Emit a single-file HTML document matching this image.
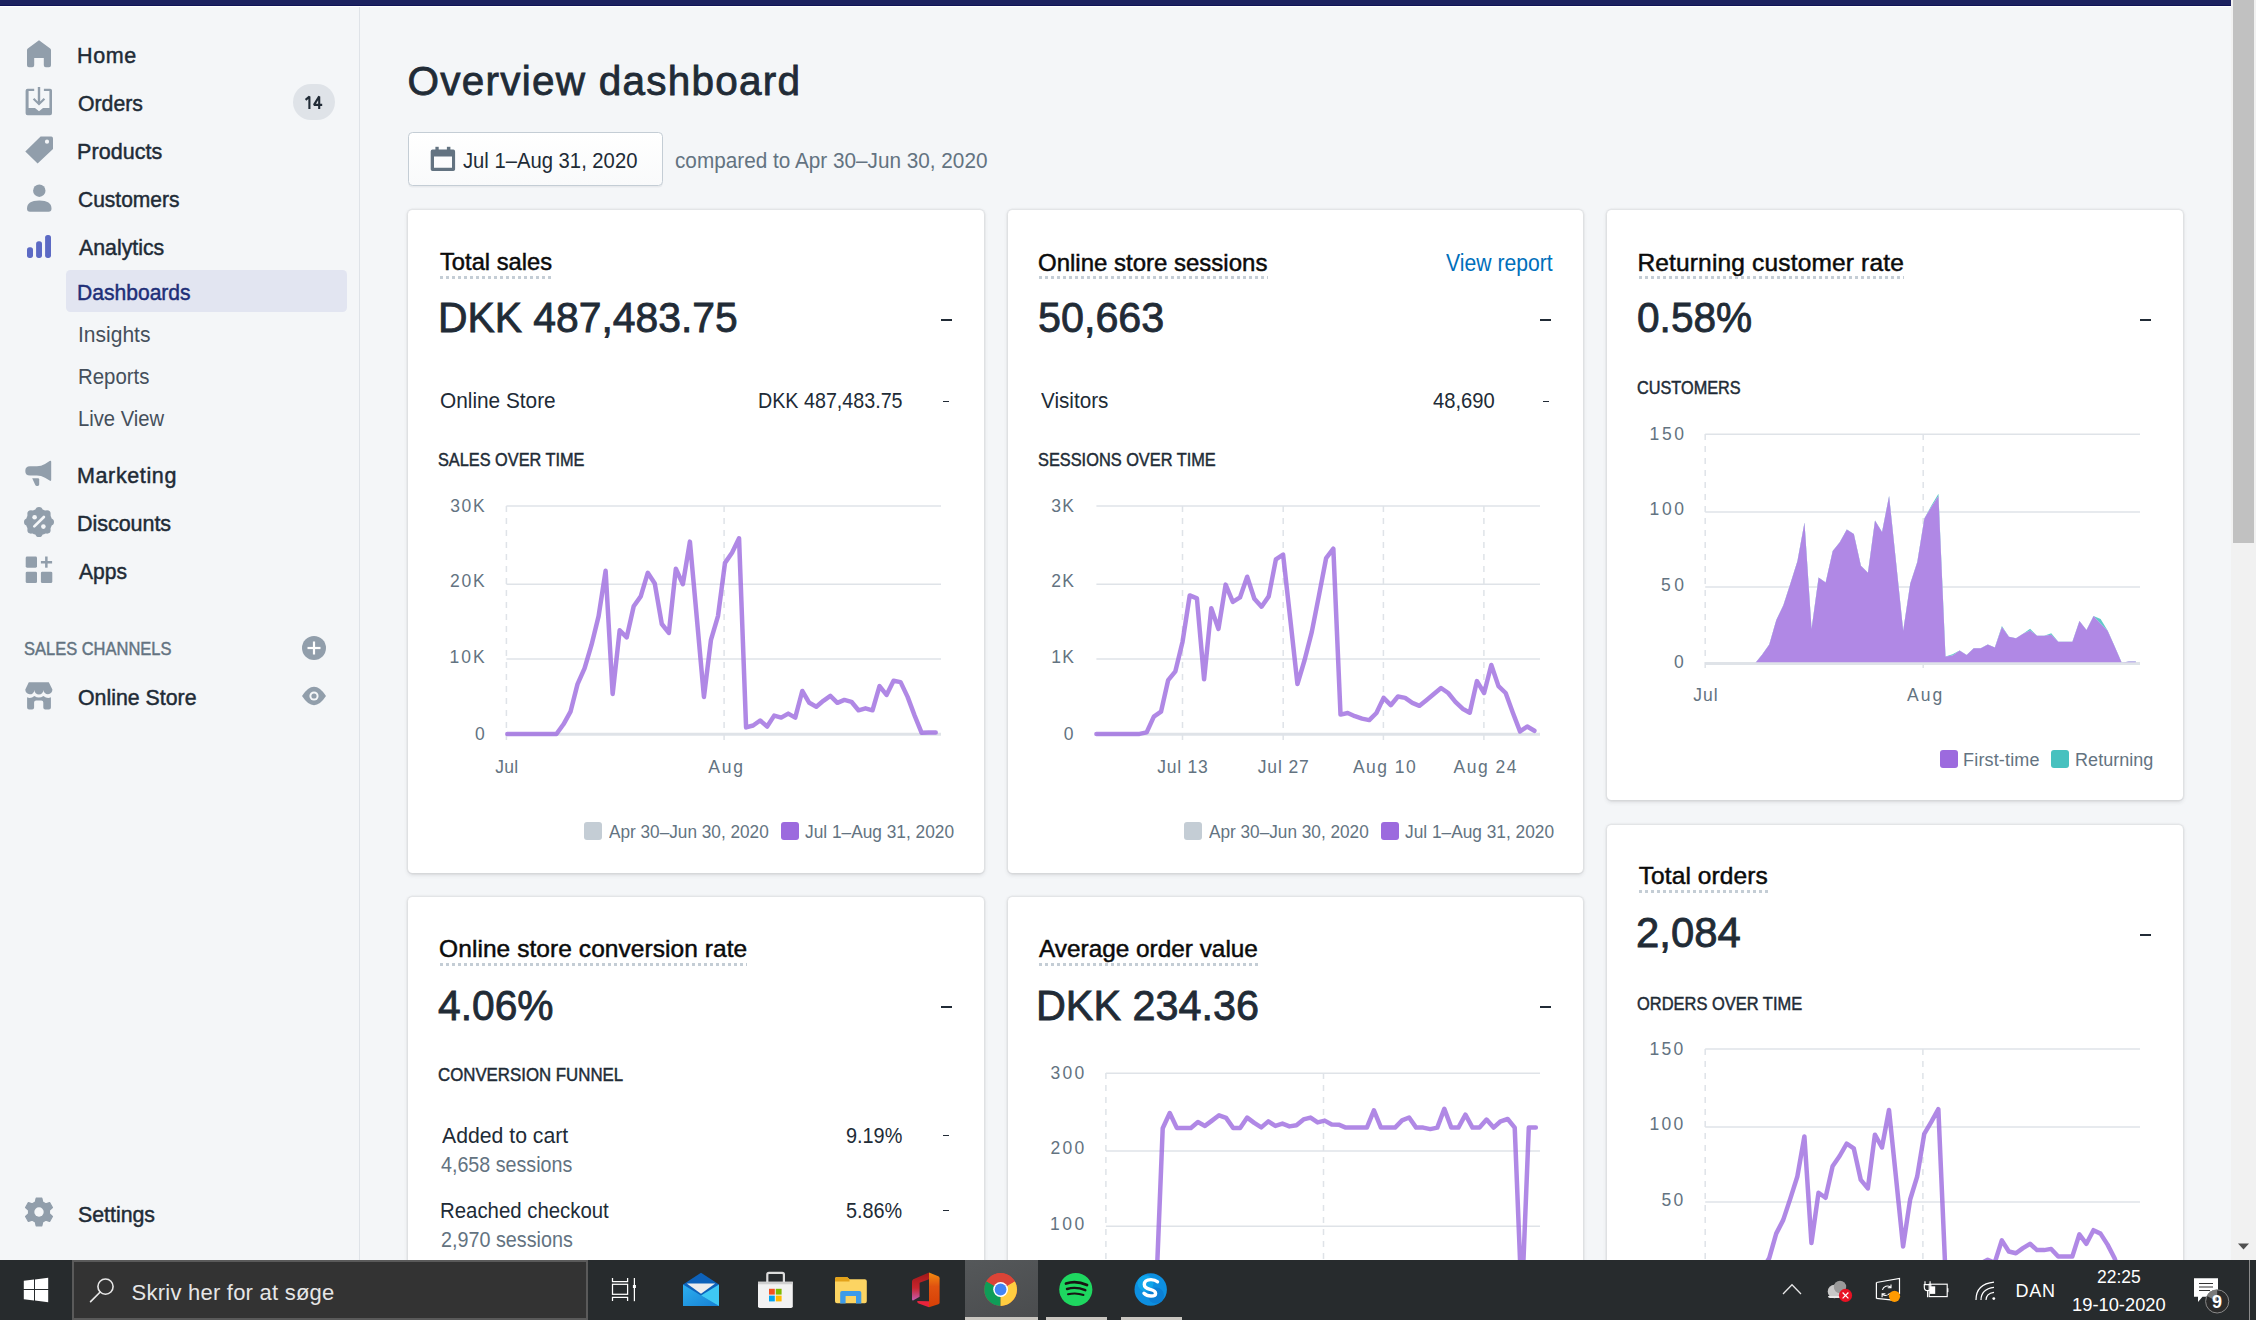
<!DOCTYPE html><html><head><meta charset="utf-8"><title>Overview dashboard</title><style>
*{margin:0;padding:0;box-sizing:border-box}
html,body{width:2256px;height:1320px;overflow:hidden;background:#f4f6f8;font-family:"Liberation Sans",sans-serif}
.t{position:absolute;white-space:nowrap;line-height:1}
.abs{position:absolute}
.card{position:absolute;background:#fff;border-radius:4.5px;box-shadow:0 0 0 1.5px rgba(63,63,68,.05),0 1.5px 4.5px 0 rgba(63,63,68,.15)}
.dot{position:absolute;height:3px;background:repeating-linear-gradient(90deg,#c4cdd5 0 3px,transparent 3px 6px)}
.dash{position:absolute;background:#212b36}
</style></head><body>
<div class="abs" style="left:0;top:0;width:2231px;height:5px;background:#1c2260"></div>
<div class="abs" style="left:0;top:5px;width:2231px;height:1px;background:#0f1357"></div>
<div class="abs" style="left:0;top:6px;width:2231px;height:1px;background:#fff"></div>
<div class="abs" style="left:359px;top:7px;width:1px;height:1253px;background:#dfe3e8"></div>
<div class="abs" style="left:66px;top:270px;width:281px;height:42px;background:#e2e5f1;border-radius:4.5px"></div>
<div class="abs" style="left:293px;top:84px;width:42px;height:36px;background:#dfe3e8;border-radius:18px"></div>
<div id="nav">
<div class="t" style="left:77.00px;top:46.10px;font-size:21.5px;color:#212b36;letter-spacing:0.633px;-webkit-text-stroke:0.45px #212b36;">Home</div>
<div class="t" style="left:77.80px;top:93.80px;font-size:21.5px;color:#212b36;transform:scaleX(0.9875);transform-origin:0 0;-webkit-text-stroke:0.45px #212b36;">Orders</div>
<div class="t" style="left:77.00px;top:141.60px;font-size:21.5px;color:#212b36;letter-spacing:0.071px;-webkit-text-stroke:0.45px #212b36;">Products</div>
<div class="t" style="left:77.70px;top:189.60px;font-size:21.5px;color:#212b36;transform:scaleX(0.9765);transform-origin:0 0;-webkit-text-stroke:0.45px #212b36;">Customers</div>
<div class="t" style="left:78.70px;top:238.10px;font-size:21.5px;color:#212b36;transform:scaleX(0.9906);transform-origin:0 0;-webkit-text-stroke:0.45px #212b36;">Analytics</div>
<div class="t" style="left:77.00px;top:466.10px;font-size:21.5px;color:#212b36;letter-spacing:0.625px;-webkit-text-stroke:0.45px #212b36;">Marketing</div>
<div class="t" style="left:77.00px;top:513.80px;font-size:21.5px;color:#212b36;letter-spacing:-0.037px;-webkit-text-stroke:0.45px #212b36;">Discounts</div>
<div class="t" style="left:78.70px;top:561.80px;font-size:21.5px;color:#212b36;transform:scaleX(0.9793);transform-origin:0 0;-webkit-text-stroke:0.45px #212b36;">Apps</div>
<div class="t" style="left:77.80px;top:688.00px;font-size:21.5px;color:#212b36;transform:scaleX(0.9915);transform-origin:0 0;-webkit-text-stroke:0.45px #212b36;">Online Store</div>
<div class="t" style="left:77.80px;top:1204.70px;font-size:21.5px;color:#212b36;transform:scaleX(0.9908);transform-origin:0 0;-webkit-text-stroke:0.45px #212b36;">Settings</div>
<div class="t" style="left:77.30px;top:282.30px;font-size:22.0px;color:#202e78;transform:scaleX(0.9578);transform-origin:0 0;-webkit-text-stroke:0.45px #202e78;">Dashboards</div>
<div class="t" style="left:77.70px;top:324.20px;font-size:22.5px;color:#454f5b;transform:scaleX(0.9343);transform-origin:0 0;">Insights</div>
<div class="t" style="left:78.00px;top:366.10px;font-size:22.5px;color:#454f5b;transform:scaleX(0.9067);transform-origin:0 0;">Reports</div>
<div class="t" style="left:78.00px;top:408.00px;font-size:22.5px;color:#454f5b;transform:scaleX(0.8980);transform-origin:0 0;">Live View</div>
<div class="t" style="left:23.60px;top:640.00px;font-size:18.5px;color:#637381;transform:scaleX(0.8907);transform-origin:0 0;-webkit-text-stroke:0.45px #637381;">SALES CHANNELS</div>
<svg class="abs" style="left:0;top:0" width="360" height="130"><g fill="none" stroke="#212b36" stroke-width="2.1"><path d="M305.6 99.9 L309.4 96.6 L309.4 108.9" stroke-linejoin="bevel"/><path d="M319.2 108.9 L319.2 96.4 L314 104.9 L322.2 104.9" stroke-linejoin="bevel"/></g></svg>
</div>
<svg class="abs" style="left:0;top:0" width="360" height="1260" viewBox="0 0 360 1260">
<g fill="#919eab">
<path d="M39 40.2 L50.2 48.6 Q51 49.2 51 50.2 L51 65.3 Q51 67.3 49 67.3 L45.8 67.3 Q43.8 67.3 43.8 65.3 L43.8 58.1 L34.2 58.1 L34.2 65.3 Q34.2 67.3 32.2 67.3 L29 67.3 Q27 67.3 27 65.3 L27 50.2 Q27 49.2 27.8 48.6 Z"/>
<path d="M27.6 88.8 L34.2 88.8 L34.2 91 L28.6 91 L28.6 108 L35 108 L39 111.3 L43 108 L49.4 108 L49.4 91 L43.9 91 L43.9 88.8 L50.2 88.8 Q52 88.8 52 90.6 L52 113.2 Q52 115.2 50 115.2 L27.6 115.2 Q25.6 115.2 25.6 113.2 L25.6 90.8 Q25.6 88.8 27.6 88.8 Z"/>
<path d="M37.8 87 L40.2 87 L40.2 101.5 L43.6 98 L45.2 99.6 L39 105.6 L32.8 99.6 L34.4 98 L37.8 101.5 Z"/>
<path fill-rule="evenodd" d="M40.6 136.6 L51.2 136.6 Q53 136.6 53 138.4 L53 149 L37.6 163.5 L25.3 151.4 Z M47 139.6 A2.1 2.1 0 1 0 47 143.8 A2.1 2.1 0 1 0 47 139.6 Z"/>
<circle cx="39.3" cy="190.7" r="6.2"/>
<path d="M27 208.7 Q27 200.5 39.25 200.5 Q51.5 200.5 51.5 208.7 Q51.5 211.7 48.5 211.7 L30 211.7 Q27 211.7 27 208.7 Z"/>
<path d="M30 466.3 L37 466.3 Q41 466.3 45 464 L49.6 461 Q51.2 460.1 51.2 461.8 L51.2 479.8 Q51.2 481.5 49.6 480.6 L45 477.8 Q41 475.6 37 475.6 L30 475.6 Q25.3 475.6 25.3 470.95 Q25.3 466.3 30 466.3 Z"/>
<path d="M32.2 478.2 L38 478.2 Q39.2 478.2 39.2 479.4 L39.2 484.6 Q39.2 486 37.6 486 L36.8 486 Q35.8 486 35.3 485 Z"/>
<circle cx="39" cy="522" r="13.1"/><circle cx="39.00" cy="510.60" r="3.6"/><circle cx="47.06" cy="513.94" r="3.6"/><circle cx="50.40" cy="522.00" r="3.6"/><circle cx="47.06" cy="530.06" r="3.6"/><circle cx="39.00" cy="533.40" r="3.6"/><circle cx="30.94" cy="530.06" r="3.6"/><circle cx="27.60" cy="522.00" r="3.6"/><circle cx="30.94" cy="513.94" r="3.6"/><circle cx="34.6" cy="517.3" r="2.3" fill="#f4f6f8"/><circle cx="43.4" cy="526.6" r="2.3" fill="#f4f6f8"/><path d="M34.3 526.4 L43.9 517" stroke="#f4f6f8" stroke-width="2.7" stroke-linecap="round"/>
<rect x="25.7" y="556.6" width="11.3" height="11.1" rx="1.4"/>
<rect x="25.7" y="571.7" width="11.3" height="11.4" rx="1.4"/>
<rect x="40.9" y="571.7" width="11.4" height="11.4" rx="1.4"/>
<rect x="40.9" y="561" width="11.2" height="2.5"/>
<rect x="45.1" y="556.5" width="2.5" height="11.2"/>
<circle cx="314" cy="648" r="12"/>
<path d="M28.8 682.3 L48.8 682.3 L52.4 689.6 A4.5 4.5 0 0 1 43.4 690 A4.5 4.5 0 0 1 34.4 690 A4.5 4.5 0 0 1 25.3 689.6 Z"/>
<path d="M27.1 697.2 Q30.5 699.2 34.4 696 Q38.9 699.2 43.4 696 Q47.5 699.2 50.9 697.2 L50.9 707.4 Q50.9 709.4 48.9 709.4 L45.3 709.4 Q43.3 709.4 43.3 707.4 L43.3 702.5 Q43.3 700.5 41.3 700.5 L36.1 700.5 Q34.1 700.5 34.1 702.5 L34.1 707.4 Q34.1 709.4 32.1 709.4 L29.1 709.4 Q27.1 709.4 27.1 707.4 Z"/>
<path d="M302 696 Q308 686.8 314 686.8 Q320 686.8 326 696 Q320 705.2 314 705.2 Q308 705.2 302 696 Z"/>
</g>
<rect x="27" y="247.3" width="6" height="10.6" rx="2.6" fill="#5c6ac4"/>
<rect x="36.1" y="241.3" width="5.9" height="16.6" rx="2.6" fill="#5c6ac4"/>
<rect x="45.1" y="235" width="5.9" height="22.9" rx="2.6" fill="#5c6ac4"/>
<g fill="#fff"><rect x="312.9" y="641.5" width="2.2" height="13"/><rect x="307.5" y="646.9" width="13" height="2.2"/></g>
<circle cx="314" cy="696" r="4.6" fill="#f4f6f8"/><circle cx="314" cy="696" r="2.6" fill="#919eab"/>
<path d="M35.27 1202.08 L36.18 1198.08 L41.82 1198.08 L42.73 1202.08 L45.72 1203.81 L49.64 1202.60 L52.46 1207.48 L49.46 1210.27 L49.46 1213.73 L52.46 1216.52 L49.64 1221.40 L45.72 1220.19 L42.73 1221.92 L41.82 1225.92 L36.18 1225.92 L35.27 1221.92 L32.28 1220.19 L28.36 1221.40 L25.54 1216.52 L28.54 1213.73 L28.54 1210.27 L25.54 1207.48 L28.36 1202.60 L32.28 1203.81 Z" fill="#919eab" stroke="#919eab" stroke-width="1.2" stroke-linejoin="round"/><circle cx="39" cy="1212" r="4.7" fill="#f4f6f8"/></svg>
<div class="t" style="left:407.40px;top:61.20px;font-size:40.5px;color:#212b36;letter-spacing:1.253px;-webkit-text-stroke:0.81px #212b36;">Overview dashboard</div>
<div class="abs" style="left:407.7px;top:132px;width:255px;height:54px;border:1.5px solid #c4cdd5;border-radius:4.5px;background:linear-gradient(#fff,#f9fafb);box-shadow:0 1.5px 0 rgba(22,29,37,.05)"></div>
<svg class="abs" style="left:0;top:0" width="700" height="200" viewBox="0 0 700 200">
<path fill="#637381" fill-rule="evenodd" d="M432.5 149.6 L453.3 149.6 Q455.1 149.6 455.1 151.4 L455.1 169.2 Q455.1 171 453.3 171 L432.5 171 Q430.7 171 430.7 169.2 L430.7 151.4 Q430.7 149.6 432.5 149.6 Z M434 156.5 L434 167.7 L452 167.7 L452 156.5 Z"/>
<rect x="435.4" y="146.8" width="3.3" height="4" fill="#637381"/><rect x="446.9" y="146.8" width="3.5" height="4" fill="#637381"/>
</svg>
<div class="t" style="left:462.90px;top:150.20px;font-size:22.5px;color:#212b36;transform:scaleX(0.8993);transform-origin:0 0;">Jul 1–Aug 31, 2020</div>
<div class="t" style="left:674.70px;top:150.20px;font-size:22.5px;color:#637381;transform:scaleX(0.9217);transform-origin:0 0;">compared to Apr 30–Jun 30, 2020</div>
<div class="card" style="left:408px;top:210px;width:576px;height:663px"></div>
<div class="card" style="left:1008px;top:210px;width:575px;height:663px"></div>
<div class="card" style="left:1607px;top:210px;width:576px;height:590px"></div>
<div class="card" style="left:1607px;top:825px;width:576px;height:600px"></div>
<div class="card" style="left:408px;top:897px;width:576px;height:600px"></div>
<div class="card" style="left:1008px;top:897px;width:575px;height:600px"></div>
<div class="t" style="left:439.50px;top:250.30px;font-size:24.5px;color:#0b0b0b;transform:scaleX(0.9677);transform-origin:0 0;-webkit-text-stroke:0.49px #0b0b0b;">Total sales</div>
<div class="dot" style="left:440px;top:275.9px;width:111.7px"></div>
<div class="t" style="left:1038.20px;top:250.50px;font-size:24.5px;color:#0b0b0b;transform:scaleX(0.9793);transform-origin:0 0;-webkit-text-stroke:0.49px #0b0b0b;">Online store sessions</div>
<div class="dot" style="left:1039.4px;top:276.1px;width:228.4px"></div>
<div class="t" style="left:1637.40px;top:250.50px;font-size:24.5px;color:#0b0b0b;letter-spacing:0.164px;-webkit-text-stroke:0.49px #0b0b0b;">Returning customer rate</div>
<div class="dot" style="left:1639.4px;top:276.1px;width:264.3px"></div>
<div class="t" style="left:1638.70px;top:864.30px;font-size:24.5px;color:#0b0b0b;letter-spacing:0.100px;-webkit-text-stroke:0.49px #0b0b0b;">Total orders</div>
<div class="dot" style="left:1639.2px;top:889.9px;width:128.8px"></div>
<div class="t" style="left:439.10px;top:937.20px;font-size:24.5px;color:#0b0b0b;letter-spacing:0.063px;-webkit-text-stroke:0.49px #0b0b0b;">Online store conversion rate</div>
<div class="dot" style="left:440.3px;top:962.8px;width:306.8px"></div>
<div class="t" style="left:1039.30px;top:937.20px;font-size:24.5px;color:#0b0b0b;transform:scaleX(0.9941);transform-origin:0 0;-webkit-text-stroke:0.49px #0b0b0b;">Average order value</div>
<div class="dot" style="left:1039.4px;top:962.8px;width:218.7px"></div>
<div class="t" style="left:1446.20px;top:251.50px;font-size:23.0px;color:#006fbb;transform:scaleX(0.9204);transform-origin:0 0;">View report</div>
<div class="t" style="left:437.60px;top:297.20px;font-size:42.0px;color:#212b36;transform:scaleX(0.9723);transform-origin:0 0;-webkit-text-stroke:0.84px #212b36;">DKK 487,483.75</div>
<div class="t" style="left:1037.70px;top:297.00px;font-size:42.0px;color:#212b36;transform:scaleX(0.9832);transform-origin:0 0;-webkit-text-stroke:0.84px #212b36;">50,663</div>
<div class="t" style="left:1637.00px;top:297.00px;font-size:42.0px;color:#212b36;transform:scaleX(0.9672);transform-origin:0 0;-webkit-text-stroke:0.84px #212b36;">0.58%</div>
<div class="t" style="left:1636.40px;top:912.00px;font-size:42.0px;color:#212b36;transform:scaleX(0.9961);transform-origin:0 0;-webkit-text-stroke:0.84px #212b36;">2,084</div>
<div class="t" style="left:437.90px;top:984.60px;font-size:42.0px;color:#212b36;transform:scaleX(0.9700);transform-origin:0 0;-webkit-text-stroke:0.84px #212b36;">4.06%</div>
<div class="t" style="left:1036.00px;top:984.60px;font-size:42.0px;color:#212b36;transform:scaleX(0.9842);transform-origin:0 0;-webkit-text-stroke:0.84px #212b36;">DKK 234.36</div>
<div class="dash" style="left:940.5px;top:318.5px;width:11px;height:2.6px"></div>
<div class="dash" style="left:1540px;top:318.5px;width:11px;height:2.6px"></div>
<div class="dash" style="left:2139.5px;top:318.5px;width:11px;height:2.6px"></div>
<div class="dash" style="left:2139.5px;top:933.5px;width:11px;height:2.6px"></div>
<div class="dash" style="left:940.5px;top:1005.5px;width:11px;height:2.6px"></div>
<div class="dash" style="left:1540px;top:1005.5px;width:11px;height:2.6px"></div>
<div class="dash" style="left:942.5px;top:400.5px;width:6px;height:1.8px"></div>
<div class="dash" style="left:1542.5px;top:400.5px;width:6px;height:1.8px"></div>
<div class="dash" style="left:942.5px;top:1134.5px;width:6px;height:1.8px"></div>
<div class="dash" style="left:942.5px;top:1209.5px;width:6px;height:1.8px"></div>
<div class="t" style="left:440.30px;top:390.20px;font-size:22.0px;color:#212b36;transform:scaleX(0.9460);transform-origin:0 0;">Online Store</div>
<div class="t" style="left:757.80px;top:390.20px;font-size:22.0px;color:#212b36;transform:scaleX(0.8954);transform-origin:0 0;">DKK 487,483.75</div>
<div class="t" style="left:1041.10px;top:390.20px;font-size:22.0px;color:#212b36;transform:scaleX(0.9393);transform-origin:0 0;">Visitors</div>
<div class="t" style="left:1433.00px;top:390.20px;font-size:22.0px;color:#212b36;transform:scaleX(0.9182);transform-origin:0 0;">48,690</div>
<div class="t" style="left:441.70px;top:1124.90px;font-size:22.0px;color:#212b36;transform:scaleX(0.9648);transform-origin:0 0;">Added to cart</div>
<div class="t" style="left:845.90px;top:1124.90px;font-size:22.0px;color:#212b36;transform:scaleX(0.9026);transform-origin:0 0;">9.19%</div>
<div class="t" style="left:441.30px;top:1154.30px;font-size:22.0px;color:#637381;transform:scaleX(0.8942);transform-origin:0 0;">4,658 sessions</div>
<div class="t" style="left:440.00px;top:1199.50px;font-size:22.0px;color:#212b36;transform:scaleX(0.9262);transform-origin:0 0;">Reached checkout</div>
<div class="t" style="left:846.00px;top:1199.50px;font-size:22.0px;color:#212b36;transform:scaleX(0.9012);transform-origin:0 0;">5.86%</div>
<div class="t" style="left:440.70px;top:1229.10px;font-size:22.0px;color:#637381;transform:scaleX(0.8979);transform-origin:0 0;">2,970 sessions</div>
<div class="t" style="left:438.10px;top:450.70px;font-size:18.0px;color:#212b36;transform:scaleX(0.9057);transform-origin:0 0;-webkit-text-stroke:0.45px #212b36;">SALES OVER TIME</div>
<div class="t" style="left:1037.80px;top:451.00px;font-size:18.0px;color:#212b36;transform:scaleX(0.9083);transform-origin:0 0;-webkit-text-stroke:0.45px #212b36;">SESSIONS OVER TIME</div>
<div class="t" style="left:1637.10px;top:379.10px;font-size:18.0px;color:#212b36;transform:scaleX(0.9044);transform-origin:0 0;-webkit-text-stroke:0.45px #212b36;">CUSTOMERS</div>
<div class="t" style="left:1636.70px;top:994.50px;font-size:18.0px;color:#212b36;transform:scaleX(0.9140);transform-origin:0 0;-webkit-text-stroke:0.45px #212b36;">ORDERS OVER TIME</div>
<div class="t" style="left:438.00px;top:1066.00px;font-size:18.0px;color:#212b36;transform:scaleX(0.9349);transform-origin:0 0;-webkit-text-stroke:0.45px #212b36;">CONVERSION FUNNEL</div>
<svg class="abs" style="left:0;top:0" width="2256" height="1320" viewBox="0 0 2256 1320">
<line x1="506.4" y1="506" x2="941" y2="506" stroke="#dfe3e8" stroke-width="1.5"/>
<line x1="506.4" y1="584.2" x2="941" y2="584.2" stroke="#dfe3e8" stroke-width="1.5"/>
<line x1="506.4" y1="658.9" x2="941" y2="658.9" stroke="#dfe3e8" stroke-width="1.5"/>
<line x1="506.4" y1="734.3" x2="941" y2="734.3" stroke="#dfe3e8" stroke-width="3"/>
<line x1="506.4" y1="506" x2="506.4" y2="742" stroke="#dfe3e8" stroke-width="1.5" stroke-dasharray="6 6"/>
<line x1="724.1" y1="506" x2="724.1" y2="742" stroke="#dfe3e8" stroke-width="1.5" stroke-dasharray="6 6"/>
<polyline points="507.30,734.00 514.32,734.00 521.35,734.00 528.37,734.00 535.39,734.00 542.41,734.00 549.44,734.00 556.46,734.00 563.48,724.30 570.51,711.70 577.53,684.10 584.55,668.30 591.58,644.70 598.60,616.10 605.62,570.80 612.64,693.90 619.67,630.30 626.69,637.40 633.71,606.30 640.74,596.40 647.76,572.80 654.78,583.60 661.81,624.00 668.83,632.90 675.85,568.80 682.88,584.20 689.90,541.60 696.92,619.00 703.94,696.90 710.97,639.80 717.99,616.10 725.01,562.90 732.04,552.70 739.06,538.30 746.08,727.40 753.11,725.50 760.13,720.50 767.15,726.50 774.17,715.60 781.20,717.60 788.22,713.60 795.24,717.60 802.27,691.00 809.29,702.80 816.31,706.70 823.34,700.80 830.36,695.90 837.38,702.80 844.40,699.90 851.43,701.80 858.45,710.30 865.47,708.30 872.50,710.30 879.52,686.10 886.54,694.90 893.57,680.70 900.59,682.10 907.61,696.90 914.63,715.60 921.66,732.80 928.68,732.40 935.70,732.40" fill="none" stroke="#9c6ade" stroke-opacity="0.8" stroke-width="4.5" stroke-linejoin="round" stroke-linecap="round"/>
<line x1="1096.4" y1="506" x2="1540" y2="506" stroke="#dfe3e8" stroke-width="1.5"/>
<line x1="1096.4" y1="584.2" x2="1540" y2="584.2" stroke="#dfe3e8" stroke-width="1.5"/>
<line x1="1096.4" y1="658.9" x2="1540" y2="658.9" stroke="#dfe3e8" stroke-width="1.5"/>
<line x1="1096.4" y1="734.3" x2="1540" y2="734.3" stroke="#dfe3e8" stroke-width="3"/>
<line x1="1182.5" y1="506" x2="1182.5" y2="742" stroke="#dfe3e8" stroke-width="1.5" stroke-dasharray="6 6"/>
<line x1="1283.2" y1="506" x2="1283.2" y2="742" stroke="#dfe3e8" stroke-width="1.5" stroke-dasharray="6 6"/>
<line x1="1383.4" y1="506" x2="1383.4" y2="742" stroke="#dfe3e8" stroke-width="1.5" stroke-dasharray="6 6"/>
<line x1="1483.9" y1="506" x2="1483.9" y2="742" stroke="#dfe3e8" stroke-width="1.5" stroke-dasharray="6 6"/>
<polyline points="1096.40,733.90 1103.58,733.90 1110.76,733.90 1117.94,733.90 1125.12,733.90 1132.30,733.90 1139.48,733.90 1146.66,732.40 1153.84,716.60 1161.02,711.70 1168.20,680.10 1175.38,671.30 1182.56,641.70 1189.74,595.40 1196.92,598.40 1204.10,679.20 1211.28,608.20 1218.46,628.90 1225.64,584.60 1232.82,601.90 1240.00,597.40 1247.18,576.70 1254.36,598.80 1261.54,606.70 1268.72,596.40 1275.90,559.40 1283.08,554.60 1290.26,619.00 1297.44,684.10 1304.62,660.00 1311.80,631.90 1318.98,595.40 1326.16,558.00 1333.34,548.70 1340.52,714.60 1347.70,713.00 1354.88,716.20 1362.06,718.60 1369.24,720.10 1376.42,713.00 1383.60,697.90 1390.78,705.20 1397.96,696.50 1405.14,697.90 1412.32,702.80 1419.50,705.80 1426.68,699.90 1433.86,693.90 1441.04,688.00 1448.22,693.00 1455.40,701.80 1462.58,708.70 1469.76,712.70 1476.94,681.10 1484.12,693.00 1491.30,665.00 1498.48,686.10 1505.66,693.00 1512.84,712.70 1520.02,731.40 1527.20,726.50 1534.38,730.80" fill="none" stroke="#9c6ade" stroke-opacity="0.8" stroke-width="4.5" stroke-linejoin="round" stroke-linecap="round"/>
<line x1="1705.2" y1="434.2" x2="2140" y2="434.2" stroke="#dfe3e8" stroke-width="1.5"/>
<line x1="1705.2" y1="512" x2="2140" y2="512" stroke="#dfe3e8" stroke-width="1.5"/>
<line x1="1705.2" y1="587.1" x2="2140" y2="587.1" stroke="#dfe3e8" stroke-width="1.5"/>
<line x1="1705.2" y1="663.4" x2="2140" y2="663.4" stroke="#dfe3e8" stroke-width="3"/>
<line x1="1705.2" y1="434" x2="1705.2" y2="672" stroke="#dfe3e8" stroke-width="1.5" stroke-dasharray="6 6"/>
<line x1="1923.2" y1="434" x2="1923.2" y2="672" stroke="#dfe3e8" stroke-width="1.5" stroke-dasharray="6 6"/>
<polygon points="1705.8,663.4 1705.80,663.30 1712.85,663.30 1719.90,663.30 1726.95,663.30 1734.00,663.30 1741.05,663.30 1748.10,663.30 1755.15,663.30 1762.20,654.50 1769.25,644.60 1776.30,620.00 1783.35,605.20 1790.40,583.50 1797.45,560.90 1804.50,522.50 1811.55,628.90 1818.60,577.60 1825.65,582.60 1832.70,551.00 1839.75,542.20 1846.80,529.40 1853.85,533.90 1860.90,565.80 1867.95,572.70 1875.00,520.50 1882.05,531.90 1889.10,495.90 1896.15,563.00 1903.20,630.80 1910.25,583.50 1917.30,561.90 1924.35,518.50 1931.40,505.50 1938.45,493.70 1945.50,656.50 1952.55,654.30 1959.60,650.50 1966.65,654.90 1973.70,648.20 1980.75,648.20 1987.80,644.60 1994.85,647.60 2001.90,625.90 2008.95,636.70 2016.00,638.30 2023.05,633.80 2030.10,628.80 2037.15,635.80 2044.20,635.80 2051.25,633.20 2058.30,641.70 2065.35,641.70 2072.40,641.70 2079.45,621.00 2086.50,629.90 2093.55,616.10 2100.60,619.00 2107.65,630.40 2114.70,646.60 2121.75,662.80 2128.80,661.40 2135.85,661.40 2135.85,663.4" fill="#47c1bf" fill-opacity="0.85"/>
<polygon points="1705.8,663.4 1705.80,663.30 1712.85,663.30 1719.90,663.30 1726.95,663.30 1734.00,663.30 1741.05,663.30 1748.10,663.30 1755.15,663.30 1762.20,654.50 1769.25,644.60 1776.30,620.00 1783.35,605.20 1790.40,583.50 1797.45,560.90 1804.50,522.50 1811.55,628.90 1818.60,577.60 1825.65,582.60 1832.70,551.00 1839.75,542.20 1846.80,529.40 1853.85,533.90 1860.90,565.80 1867.95,572.70 1875.00,520.50 1882.05,531.90 1889.10,495.90 1896.15,563.00 1903.20,630.80 1910.25,583.50 1917.30,561.90 1924.35,518.50 1931.40,506.70 1938.45,495.90 1945.50,656.50 1952.55,655.50 1959.60,650.50 1966.65,654.90 1973.70,648.20 1980.75,648.20 1987.80,644.60 1994.85,647.60 2001.90,626.90 2008.95,636.70 2016.00,638.30 2023.05,633.80 2030.10,630.40 2037.15,635.80 2044.20,635.80 2051.25,634.80 2058.30,641.70 2065.35,641.70 2072.40,641.70 2079.45,621.00 2086.50,629.90 2093.55,616.10 2100.60,623.70 2107.65,630.80 2114.70,646.60 2121.75,662.80 2128.80,661.40 2135.85,661.40 2135.85,663.4" fill="#ffffff" fill-opacity="1"/>
<polygon points="1705.8,663.4 1705.80,663.30 1712.85,663.30 1719.90,663.30 1726.95,663.30 1734.00,663.30 1741.05,663.30 1748.10,663.30 1755.15,663.30 1762.20,654.50 1769.25,644.60 1776.30,620.00 1783.35,605.20 1790.40,583.50 1797.45,560.90 1804.50,522.50 1811.55,628.90 1818.60,577.60 1825.65,582.60 1832.70,551.00 1839.75,542.20 1846.80,529.40 1853.85,533.90 1860.90,565.80 1867.95,572.70 1875.00,520.50 1882.05,531.90 1889.10,495.90 1896.15,563.00 1903.20,630.80 1910.25,583.50 1917.30,561.90 1924.35,518.50 1931.40,506.70 1938.45,495.90 1945.50,656.50 1952.55,655.50 1959.60,650.50 1966.65,654.90 1973.70,648.20 1980.75,648.20 1987.80,644.60 1994.85,647.60 2001.90,626.90 2008.95,636.70 2016.00,638.30 2023.05,633.80 2030.10,630.40 2037.15,635.80 2044.20,635.80 2051.25,634.80 2058.30,641.70 2065.35,641.70 2072.40,641.70 2079.45,621.00 2086.50,629.90 2093.55,616.10 2100.60,623.70 2107.65,630.80 2114.70,646.60 2121.75,662.80 2128.80,661.40 2135.85,661.40 2135.85,663.4" fill="#9c6ade" fill-opacity="0.8"/>
<line x1="1705.2" y1="663.6" x2="2140" y2="663.6" stroke="#dfe3e8" stroke-width="2.6"/>
<line x1="1705.2" y1="1049" x2="2140" y2="1049" stroke="#dfe3e8" stroke-width="1.5"/>
<line x1="1705.2" y1="1127" x2="2140" y2="1127" stroke="#dfe3e8" stroke-width="1.5"/>
<line x1="1705.2" y1="1202" x2="2140" y2="1202" stroke="#dfe3e8" stroke-width="1.5"/>
<line x1="1705.2" y1="1278.5" x2="2140" y2="1278.5" stroke="#dfe3e8" stroke-width="3"/>
<line x1="1705.2" y1="1049" x2="1705.2" y2="1288" stroke="#dfe3e8" stroke-width="1.5" stroke-dasharray="6 6"/>
<line x1="1922.9" y1="1049" x2="1922.9" y2="1288" stroke="#dfe3e8" stroke-width="1.5" stroke-dasharray="6 6"/>
<polyline points="1705.70,1278.50 1712.75,1278.50 1719.80,1278.50 1726.85,1278.50 1733.90,1278.50 1740.95,1278.50 1748.00,1278.50 1755.05,1278.50 1762.10,1269.70 1769.15,1258.30 1776.20,1233.60 1783.25,1219.90 1790.30,1198.60 1797.35,1176.50 1804.40,1136.40 1811.45,1243.00 1818.50,1192.70 1825.55,1197.80 1832.60,1166.20 1839.65,1156.00 1846.70,1143.70 1853.75,1148.30 1860.80,1179.90 1867.85,1188.40 1874.90,1134.70 1881.95,1147.50 1889.00,1110.00 1896.05,1178.00 1903.10,1246.40 1910.15,1199.50 1917.20,1176.50 1924.25,1133.90 1931.30,1121.90 1938.35,1109.10 1945.40,1271.70 1952.45,1270.70 1959.50,1265.70 1966.55,1270.10 1973.60,1263.40 1980.65,1263.40 1987.70,1259.80 1994.75,1262.80 2001.80,1240.40 2008.85,1251.50 2015.90,1253.20 2022.95,1248.10 2030.00,1243.80 2037.05,1250.10 2044.10,1250.10 2051.15,1248.90 2058.20,1256.60 2065.25,1256.60 2072.30,1256.60 2079.35,1234.40 2086.40,1243.80 2093.45,1230.20 2100.50,1233.60 2107.55,1244.60 2114.60,1258.30 2121.65,1278.00 2128.70,1276.60 2135.75,1276.60" fill="none" stroke="#9c6ade" stroke-opacity="0.8" stroke-width="4.5" stroke-linejoin="round" stroke-linecap="round"/>
<line x1="1105.9" y1="1073.3" x2="1540" y2="1073.3" stroke="#dfe3e8" stroke-width="1.5"/>
<line x1="1105.9" y1="1150.9" x2="1540" y2="1150.9" stroke="#dfe3e8" stroke-width="1.5"/>
<line x1="1105.9" y1="1226.2" x2="1540" y2="1226.2" stroke="#dfe3e8" stroke-width="1.5"/>
<line x1="1105.9" y1="1302.7" x2="1540" y2="1302.7" stroke="#dfe3e8" stroke-width="3"/>
<line x1="1105.9" y1="1073" x2="1105.9" y2="1312" stroke="#dfe3e8" stroke-width="1.5" stroke-dasharray="6 6"/>
<line x1="1323.5" y1="1073" x2="1323.5" y2="1312" stroke="#dfe3e8" stroke-width="1.5" stroke-dasharray="6 6"/>
<polyline points="1106.40,1302.70 1113.44,1302.70 1120.48,1302.70 1127.52,1302.70 1134.56,1302.70 1141.60,1302.70 1148.64,1302.70 1155.68,1302.70 1162.72,1128.20 1169.76,1113.00 1176.80,1127.90 1183.84,1127.90 1190.88,1127.90 1197.92,1122.10 1204.96,1125.90 1212.00,1120.60 1219.04,1115.30 1226.08,1117.90 1233.12,1127.90 1240.16,1127.90 1247.20,1117.60 1254.24,1122.90 1261.28,1127.40 1268.32,1121.40 1275.36,1125.90 1282.40,1123.60 1289.44,1126.40 1296.48,1125.20 1303.52,1119.40 1310.56,1117.60 1317.60,1122.40 1324.64,1120.60 1331.68,1124.50 1338.72,1124.70 1345.76,1127.60 1352.80,1127.60 1359.84,1127.60 1366.88,1127.60 1373.92,1110.30 1380.96,1127.60 1388.00,1127.60 1395.04,1127.60 1402.08,1120.40 1409.12,1117.50 1416.16,1127.60 1423.20,1127.60 1430.24,1129.10 1437.28,1127.60 1444.32,1108.90 1451.36,1127.60 1458.40,1127.60 1465.44,1114.70 1472.48,1127.60 1479.52,1127.60 1486.56,1119.60 1493.60,1127.60 1500.64,1121.30 1507.68,1119.00 1514.72,1127.60 1521.76,1302.70 1528.80,1127.60 1535.84,1127.60" fill="none" stroke="#9c6ade" stroke-opacity="0.8" stroke-width="4.5" stroke-linejoin="round" stroke-linecap="round"/>
</svg>
<div class="t" style="left:450.20px;top:498.00px;font-size:17.5px;color:#637381;letter-spacing:1.700px;">30K</div>
<div class="t" style="left:450.00px;top:573.30px;font-size:17.5px;color:#637381;letter-spacing:1.800px;">20K</div>
<div class="t" style="left:449.60px;top:649.20px;font-size:17.5px;color:#637381;letter-spacing:2.000px;">10K</div>
<div class="t" style="left:475.00px;top:726.00px;font-size:17.5px;color:#637381;">0</div>
<div class="t" style="left:495.20px;top:759.00px;font-size:17.5px;color:#637381;letter-spacing:0.300px;">Jul</div>
<div class="t" style="left:708.20px;top:759.00px;font-size:17.5px;color:#637381;letter-spacing:1.800px;">Aug</div>
<div class="t" style="left:1051.20px;top:498.00px;font-size:17.5px;color:#637381;letter-spacing:1.300px;">3K</div>
<div class="t" style="left:1051.20px;top:573.30px;font-size:17.5px;color:#637381;letter-spacing:1.300px;">2K</div>
<div class="t" style="left:1051.20px;top:649.20px;font-size:17.5px;color:#637381;letter-spacing:1.300px;">1K</div>
<div class="t" style="left:1063.80px;top:726.00px;font-size:17.5px;color:#637381;">0</div>
<div class="t" style="left:1157.30px;top:759.00px;font-size:17.5px;color:#637381;letter-spacing:0.740px;">Jul 13</div>
<div class="t" style="left:1257.70px;top:759.00px;font-size:17.5px;color:#637381;letter-spacing:0.880px;">Jul 27</div>
<div class="t" style="left:1353.00px;top:759.00px;font-size:17.5px;color:#637381;letter-spacing:1.440px;">Aug 10</div>
<div class="t" style="left:1453.60px;top:759.00px;font-size:17.5px;color:#637381;letter-spacing:1.460px;">Aug 24</div>
<div class="t" style="left:1649.60px;top:426.00px;font-size:17.5px;color:#637381;letter-spacing:2.600px;">150</div>
<div class="t" style="left:1649.60px;top:501.00px;font-size:17.5px;color:#637381;letter-spacing:2.600px;">100</div>
<div class="t" style="left:1661.10px;top:576.90px;font-size:17.5px;color:#637381;letter-spacing:3.500px;">50</div>
<div class="t" style="left:1674.10px;top:653.70px;font-size:17.5px;color:#637381;">0</div>
<div class="t" style="left:1693.30px;top:687.40px;font-size:17.5px;color:#637381;letter-spacing:0.950px;">Jul</div>
<div class="t" style="left:1907.00px;top:687.40px;font-size:17.5px;color:#637381;letter-spacing:2.000px;">Aug</div>
<div class="t" style="left:1649.60px;top:1041.30px;font-size:17.5px;color:#637381;letter-spacing:2.200px;">150</div>
<div class="t" style="left:1649.60px;top:1116.20px;font-size:17.5px;color:#637381;letter-spacing:2.200px;">100</div>
<div class="t" style="left:1661.50px;top:1192.00px;font-size:17.5px;color:#637381;letter-spacing:2.300px;">50</div>
<div class="t" style="left:1050.60px;top:1065.20px;font-size:17.5px;color:#637381;letter-spacing:2.250px;">300</div>
<div class="t" style="left:1050.40px;top:1140.20px;font-size:17.5px;color:#637381;letter-spacing:2.350px;">200</div>
<div class="t" style="left:1050.00px;top:1216.00px;font-size:17.5px;color:#637381;letter-spacing:2.550px;">100</div>
<div class="abs" style="left:584.2px;top:822px;width:17.7px;height:17.8px;border-radius:3px;background:#c4cdd5"></div>
<div class="abs" style="left:781px;top:822px;width:17.7px;height:17.8px;border-radius:3px;background:#9c6ade"></div>
<div class="t" style="left:608.70px;top:822.50px;font-size:18.0px;color:#637381;transform:scaleX(0.9555);transform-origin:0 0;">Apr 30–Jun 30, 2020</div>
<div class="t" style="left:804.60px;top:822.50px;font-size:18.0px;color:#637381;transform:scaleX(0.9611);transform-origin:0 0;">Jul 1–Aug 31, 2020</div>
<div class="abs" style="left:1184.2px;top:822px;width:17.7px;height:17.8px;border-radius:3px;background:#c4cdd5"></div>
<div class="abs" style="left:1381px;top:822px;width:17.7px;height:17.8px;border-radius:3px;background:#9c6ade"></div>
<div class="t" style="left:1208.70px;top:822.50px;font-size:18.0px;color:#637381;transform:scaleX(0.9555);transform-origin:0 0;">Apr 30–Jun 30, 2020</div>
<div class="t" style="left:1404.60px;top:822.50px;font-size:18.0px;color:#637381;transform:scaleX(0.9611);transform-origin:0 0;">Jul 1–Aug 31, 2020</div>
<div class="abs" style="left:1940.1px;top:750.1px;width:17.8px;height:17.8px;border-radius:3px;background:#9c6ade"></div>
<div class="abs" style="left:2051px;top:750.1px;width:17.8px;height:17.8px;border-radius:3px;background:#47c1bf"></div>
<div class="t" style="left:1963.10px;top:750.90px;font-size:18.0px;color:#637381;letter-spacing:0.156px;">First-time</div>
<div class="t" style="left:2075.10px;top:750.90px;font-size:18.0px;color:#637381;letter-spacing:0.012px;">Returning</div>
<div class="abs" style="left:2231px;top:0;width:25px;height:1260px;background:#f1f1f1"></div>
<div class="abs" style="left:2233px;top:0;width:21px;height:543px;background:#c1c1c1"></div>
<svg class="abs" style="left:2232px;top:1236px" width="24" height="24"><path d="M6 7.5 L17 7.5 L11.5 13.5 Z" fill="#505050"/></svg>
<div id="taskbar" class="abs" style="left:0;top:1260px;width:2256px;height:60px;background:#272b2d;z-index:10">
<div class="abs" style="left:72px;top:0;width:516px;height:60px;background:#333333;border:2px solid #5a5a5a"></div>
<div class="abs" style="left:965px;top:0;width:73px;height:60px;background:linear-gradient(160deg,#55585a,#4a4c4e)"></div>
<div class="abs" style="left:965px;top:57px;width:73px;height:3px;background:#c9c6c0"></div>
<div class="abs" style="left:1046px;top:57px;width:61px;height:3px;background:#c9c6c0"></div>
<div class="abs" style="left:1121px;top:57px;width:61px;height:3px;background:#c9c6c0"></div>
<div class="abs" style="left:2248.5px;top:0;width:1.2px;height:60px;background:#8a8a8a"></div>
</div>
<svg class="abs" style="left:0;top:1260px;z-index:11" width="2256" height="60" viewBox="0 1260 2256 60">
<g fill="#fff">
<path d="M23.8 1280.7 L34 1279.6 L34 1289 L23.8 1289 Z"/>
<path d="M35 1279.5 L48.2 1277.7 L48.2 1289 L35 1289 Z"/>
<path d="M23.8 1290 L34 1290 L34 1300.4 L23.8 1299.2 Z"/>
<path d="M35 1290 L48.2 1290 L48.2 1302.3 L35 1300.6 Z"/>
</g>
<circle cx="105.5" cy="1286.6" r="7.6" fill="none" stroke="#e6e6e6" stroke-width="1.6"/>
<path d="M100.2 1292 L90.6 1301.6" stroke="#e6e6e6" stroke-width="1.7" stroke-linecap="round"/>
<g fill="none" stroke="#fff" stroke-width="1.25">
<path d="M612.5 1277.9 L612.5 1281.6 L627.6 1281.6 L627.6 1277.9"/>
<rect x="612.5" y="1284.3" width="15.1" height="10"/>
<path d="M612.5 1301 L612.5 1297.4 L627.6 1297.4 L627.6 1301"/>
<path d="M634.4 1278 L634.4 1301.2"/>
</g>
<rect x="632.9" y="1285" width="3" height="3" fill="#fff"/>
<defs><linearGradient id="mailg" x1="0" y1="0" x2="1" y2="1"><stop offset="0" stop-color="#2cb0f0"/><stop offset="1" stop-color="#1780d4"/></linearGradient></defs>
<path d="M683 1284.5 L701 1272.8 L719 1284.5 L719 1306 L683 1306 Z" fill="#0d62ba"/>
<path d="M686.8 1283.6 L715.2 1283.6 L701 1293.8 Z" fill="#ededed"/>
<path d="M683 1284.5 L701 1295.6 L719 1306 L683 1306 Z" fill="url(#mailg)"/>
<path d="M701 1295.6 L719 1284.5 L719 1306 Z" fill="#3ec8f4"/>
<path d="M767.3 1282 L767.3 1274.6 Q767.3 1272.9 769 1272.9 L782.2 1272.9 Q783.9 1272.9 783.9 1274.6 L783.9 1282" fill="none" stroke="#dcdcdc" stroke-width="2.2"/>
<path d="M758 1281.8 L792.8 1281.8 L792.8 1306.2 Q792.8 1308 791 1308 L759.8 1308 Q758 1308 758 1306.2 Z" fill="#f2f2f2"/>
<rect x="758" y="1281.8" width="34.8" height="2.5" fill="#cfcfcf"/>
<rect x="769" y="1288.8" width="5.8" height="5.8" fill="#f25022"/><rect x="775.8" y="1288.8" width="5.8" height="5.8" fill="#7fba00"/>
<rect x="769" y="1295.6" width="5.8" height="5.8" fill="#00a4ef"/><rect x="775.8" y="1295.6" width="5.8" height="5.8" fill="#ffb900"/>
<path d="M835 1279 Q835 1276.9 837 1276.9 L847 1276.9 L849.5 1279.3 L864.8 1279.3 Q866.8 1279.3 866.8 1281.3 L866.8 1301.2 Q866.8 1303.2 864.8 1303.2 L837 1303.2 Q835 1303.2 835 1301.2 Z" fill="#fcd462"/>
<path d="M835 1279 Q835 1276.9 837 1276.9 L847 1276.9 L849.5 1279.3 L849.5 1281.6 L835 1281.6 Z" fill="#e3a21a"/>
<path d="M840.2 1303.6 L840.2 1292.8 Q840.2 1291 842 1291 L859.5 1291 Q861.3 1291 861.3 1292.8 L861.3 1303.6 L856 1303.6 L856 1296 L845.6 1296 L845.6 1303.6 Z" fill="#3d9be9"/>
<defs><linearGradient id="offl" x1="0" y1="0" x2="0" y2="1"><stop offset="0" stop-color="#9e1818"/><stop offset="0.55" stop-color="#c8242d"/><stop offset="1" stop-color="#c45cb0"/></linearGradient>
<linearGradient id="offr" x1="0" y1="0" x2="0" y2="1"><stop offset="0" stop-color="#f38c10"/><stop offset="0.4" stop-color="#e05210"/><stop offset="1" stop-color="#d63f06"/></linearGradient></defs>
<path d="M912 1281.5 Q912 1280 913.3 1279.2 L929 1272.5 L929 1279.3 L919.6 1282.8 L919.6 1296.8 L913.5 1300.2 Q912 1300.9 912 1299.3 Z" fill="url(#offl)"/>
<path d="M917.3 1301 L929 1301.2 L929 1307.2 L918.6 1303.4 Q916.5 1302.5 917.3 1301 Z" fill="#e8243c"/>
<path d="M929 1272.5 L938.3 1276.2 Q939.6 1276.8 939.6 1278.2 L939.6 1302.4 Q939.6 1303.8 938.3 1304.3 L929 1307.2 Z" fill="url(#offr)"/>
<circle cx="1000.6" cy="1289.5" r="16.4" fill="#db4437"/>
<path d="M1000.6 1289.5 L986.4 1281.3 A16.4 16.4 0 0 0 1000.6 1305.9 Z" fill="#0f9d58"/>
<path d="M1000.6 1289.5 L1000.6 1305.9 A16.4 16.4 0 0 0 1014.8 1281.3 Z" fill="#ffcd40"/>
<path d="M1000.6 1289.5 L986.4 1281.3 A16.4 16.4 0 0 1 1014.8 1281.3 Z" fill="#db4437"/>
<circle cx="1000.6" cy="1289.5" r="7.4" fill="#fff"/><circle cx="1000.6" cy="1289.5" r="5.9" fill="#4285f4"/>
<circle cx="1075.8" cy="1289.5" r="16.6" fill="#1ed760"/>
<g fill="none" stroke="#191414" stroke-linecap="round"><path d="M1066 1283.5 Q1076 1280 1087 1285" stroke-width="2.8"/><path d="M1067 1289 Q1076 1286.3 1085.3 1290.2" stroke-width="2.4"/><path d="M1068 1294.3 Q1076 1292.2 1083.5 1295" stroke-width="2"/></g>
<circle cx="1150.7" cy="1289.5" r="16.2" fill="#0d8fe0"/>
<circle cx="1145.5" cy="1283.3" r="8" fill="#0fa5ea"/><circle cx="1156" cy="1295.5" r="8" fill="#0b7fd4"/>
<path d="M1157.5 1281.8 Q1155 1279.6 1151 1279.6 Q1144.3 1279.6 1144.3 1284.6 Q1144.3 1288 1150 1289.4 Q1155.6 1290.7 1155.6 1293.4 Q1155.6 1296 1151 1296 Q1146.8 1296 1144 1293.3" fill="none" stroke="#fff" stroke-width="3.4" stroke-linecap="round"/>
<path d="M1783 1294 L1792 1284.8 L1801 1294" fill="none" stroke="#e8e8e8" stroke-width="1.3"/>
<circle cx="1834.5" cy="1291.5" r="6.8" fill="#c8c8c8"/><circle cx="1840" cy="1287" r="6.2" fill="#9a9a9a"/>
<path d="M1828 1296 L1848 1296 L1848 1298 L1830 1298 Q1828 1298 1828 1296 Z" fill="#e8e8e8"/>
<circle cx="1845.5" cy="1295.4" r="6.6" fill="#e81123"/>
<path d="M1842.6 1292.5 L1848.4 1298.3 M1848.4 1292.5 L1842.6 1298.3" stroke="#fff" stroke-width="1.2"/>
<path d="M1876.4 1282.5 L1899.5 1278.4 L1899.5 1294 M1893 1300.2 L1876.4 1298.4 Z" fill="none" stroke="#fff" stroke-width="1.2"/>
<path d="M1876.4 1282.5 L1876.4 1298.4" stroke="#fff" stroke-width="1.2"/>
<path d="M1882.4 1289.8 A5.2 5.2 0 0 1 1890.6 1287.2 M1891 1284.4 L1891 1287.8 L1887.7 1287.8 M1889.6 1293.2 A5.2 5.2 0 0 1 1882.6 1294.6 M1882.1 1297.2 L1882.1 1293.9 L1885.4 1293.9" fill="none" stroke="#fff" stroke-width="1.1"/>
<circle cx="1894.5" cy="1296.3" r="5.6" fill="#ff9a00"/>
<g fill="none" stroke="#fff" stroke-width="1.15">
<rect x="1929.2" y="1284.2" width="18" height="12.4"/>
<path d="M1925 1281.2 L1925 1284.6 M1930.1 1281.2 L1930.1 1284.6 M1924.3 1284.6 L1930.8 1284.6 L1930.8 1287.2 Q1930.8 1290.6 1927.55 1290.6 Q1924.3 1290.6 1924.3 1287.2 Z M1927.55 1290.6 L1927.55 1297.2"/>
</g>
<rect x="1929.8" y="1286.3" width="5.4" height="7.6" fill="#fff"/>
<rect x="1947.2" y="1288.2" width="1.2" height="4" fill="#fff"/>
<g fill="none" stroke="#fff" stroke-width="1.2">
<path d="M1976 1300 Q1976 1284 1994 1282.2"/>
<path d="M1981 1300 Q1981 1289 1994 1287.3"/>
<path d="M1986 1300 Q1986 1293.5 1994 1292.3"/>
</g>
<circle cx="1993.8" cy="1298.6" r="1.4" fill="#fff"/>
<path d="M2194 1278.2 L2218 1278.2 L2218 1296.7 L2202.5 1296.7 L2198 1302 L2198 1296.7 L2194 1296.7 Z" fill="#fff"/>
<g stroke="#333" stroke-width="1"><path d="M2199 1283.5 L2213 1283.5 M2199 1287 L2213 1287 M2199 1290.5 L2210 1290.5"/></g>
<circle cx="2217.2" cy="1301.4" r="11.6" fill="#2b2b2b" stroke="#8a8a8a" stroke-width="1"/>
<path d="M2217.2 1301.4 L2207 1296 A11.6 11.6 0 0 1 2217.2 1289.8 Z" fill="#7a7a7a"/>
</svg>
<div class="t" style="left:131.60px;top:1282.00px;font-size:22.0px;color:#e6e6e6;letter-spacing:0.230px;z-index:12;">Skriv her for at søge</div>
<div class="t" style="left:2015.60px;top:1281.70px;font-size:18.0px;color:#fff;letter-spacing:0.650px;z-index:12;">DAN</div>
<div class="t" style="left:2096.90px;top:1267.10px;font-size:19.0px;color:#fff;transform:scaleX(0.9194);transform-origin:0 0;z-index:12;">22:25</div>
<div class="t" style="left:2072.40px;top:1294.90px;font-size:19.0px;color:#fff;transform:scaleX(0.9642);transform-origin:0 0;z-index:12;">19-10-2020</div>
<div class="t" style="left:2211.90px;top:1292.50px;font-size:18.0px;color:#fff;font-weight:700;z-index:12;">9</div>
</body></html>
